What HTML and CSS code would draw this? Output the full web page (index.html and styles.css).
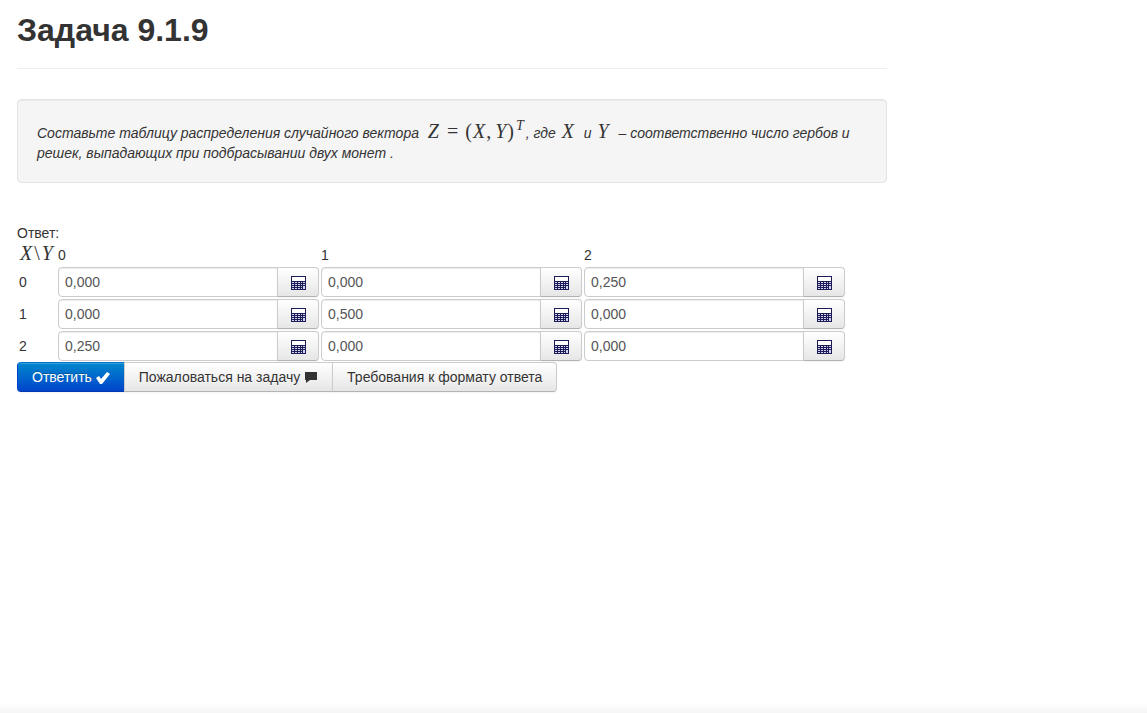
FILE: index.html
```html
<!DOCTYPE html>
<html lang="ru">
<head>
<meta charset="utf-8">
<title>Задача 9.1.9</title>
<link rel="stylesheet" href="styles.css">
</head>
<body>
<svg class="sprite" aria-hidden="true">
  <symbol id="calc" viewBox="0 0 16 16">
    <path fill="#1c1c58" d="M1 1h15v14H1z"/>
    <path fill="#fff" d="M2 2h13v4H2z"/>
    <path fill="#d4d4ec" d="M2 7h2v1H2zM5 7h2v1H5zM8 7h2v1H8zM11 7h1v1h-1zM13 7h2v1h-2zM2 9h2v1H2zM5 9h2v1H5zM8 9h2v1H8zM11 9h1v1h-1zM13 9h2v1h-2zM2 11h2v1H2zM5 11h2v1H5zM8 11h2v1H8zM11 11h1v1h-1zM13 11h2v3h-2zM2 13h2v1H2zM5 13h2v1H5zM8 13h2v1H8zM11 13h1v1h-1z"/>
  </symbol>
</svg>
<main class="container">
  <header class="page-header"><h1>Задача 9.1.9</h1></header>
  <p class="well">Составьте таблицу распределения случайного вектора <span class="math formula"><i>Z</i><span class="rel">=</span>(<i>X</i>,<i class="after-comma">Y</i>)<sup>T</sup></span>, где <span class="math var"><i>X</i></span> и <span class="math var"><i>Y</i></span> – соответственно число гербов и решек, выпадающих при подбрасывании двух монет .</p>
  <form class="answer">
    <div>Ответ:</div>
    <table class="grid">
      <thead>
        <tr><th class="corner" scope="col"><span class="math"><i>X</i><span class="slash">\</span><i>Y</i></span></th><th scope="col">0</th><th scope="col">1</th><th scope="col">2</th></tr>
      </thead>
      <tbody>
        <tr><th scope="row">0</th>
          <td><div class="field"><input type="text" value="0,000" aria-label="X=0, Y=0"><button type="button" class="btn" aria-label="Калькулятор"><svg class="icon"><use href="#calc"/></svg></button></div></td>
          <td><div class="field"><input type="text" value="0,000" aria-label="X=0, Y=1"><button type="button" class="btn" aria-label="Калькулятор"><svg class="icon"><use href="#calc"/></svg></button></div></td>
          <td><div class="field"><input type="text" value="0,250" aria-label="X=0, Y=2"><button type="button" class="btn" aria-label="Калькулятор"><svg class="icon"><use href="#calc"/></svg></button></div></td></tr>
        <tr><th scope="row">1</th>
          <td><div class="field"><input type="text" value="0,000" aria-label="X=1, Y=0"><button type="button" class="btn" aria-label="Калькулятор"><svg class="icon"><use href="#calc"/></svg></button></div></td>
          <td><div class="field"><input type="text" value="0,500" aria-label="X=1, Y=1"><button type="button" class="btn" aria-label="Калькулятор"><svg class="icon"><use href="#calc"/></svg></button></div></td>
          <td><div class="field"><input type="text" value="0,000" aria-label="X=1, Y=2"><button type="button" class="btn" aria-label="Калькулятор"><svg class="icon"><use href="#calc"/></svg></button></div></td></tr>
        <tr><th scope="row">2</th>
          <td><div class="field"><input type="text" value="0,250" aria-label="X=2, Y=0"><button type="button" class="btn" aria-label="Калькулятор"><svg class="icon"><use href="#calc"/></svg></button></div></td>
          <td><div class="field"><input type="text" value="0,000" aria-label="X=2, Y=1"><button type="button" class="btn" aria-label="Калькулятор"><svg class="icon"><use href="#calc"/></svg></button></div></td>
          <td><div class="field"><input type="text" value="0,000" aria-label="X=2, Y=2"><button type="button" class="btn" aria-label="Калькулятор"><svg class="icon"><use href="#calc"/></svg></button></div></td></tr>
      </tbody>
    </table>
    <div class="btn-group">
      <button type="submit" class="btn btn-primary">Ответить <svg class="glyph" viewBox="0 0 14 14"><path fill="#fff" d="M0 7l3-2 2 3 6-7 3 2-8 10H4z"/></svg></button>
      <button type="button" class="btn">Пожаловаться на задачу <svg class="glyph" viewBox="0 0 14 14"><path fill="#333" d="M1 1h12v8H6l-4 3V9H1z"/></svg></button>
      <button type="button" class="btn">Требования к формату ответа</button>
    </div>
  </form>
</main>
<footer class="page-edge"></footer>
</body>
</html>
```
FILE: styles.css
```css
* { box-sizing: border-box; }
body {
  margin: 0;
  min-height: 100vh;
  display: flex;
  flex-direction: column;
  font: 14px/20px "Liberation Sans", Arial, sans-serif;
  color: #333;
  background: #fff;
}
.sprite { display: none; }
.container { width: 100%; max-width: 904px; padding: 10px 17px; }
.page-header { padding-bottom: 18px; margin-bottom: 30px; border-bottom: 1px solid #eee; }
h1 { margin: 0; font-size: 32px; line-height: 40px; font-weight: bold; }
.well {
  margin: 0 0 40px;
  padding: 21px 19px 19px;
  background: #f5f5f5;
  border: 1px solid #e3e3e3;
  border-radius: 4px;
  box-shadow: inset 0 1px 1px rgba(0, 0, 0, .05);
  font-style: italic;
}
.math {
  font: 20px/20px "Liberation Serif", "Times New Roman", serif;
  white-space: nowrap;
}
.formula { margin-left: 4px; }
.math i { margin: 0 1px; font-style: italic; }
.math sup { margin: 0 2px; font-size: 14px; line-height: 0; font-style: italic; vertical-align: 8px; }
.rel { margin: 0 7px; }
.slash { margin: 0 1px; }
.math .after-comma { margin-left: 4px; }
.var { margin: 0 5px 0 1px; }
.grid { border-spacing: 2px; border-collapse: separate; margin-top: -2px; }
.grid th, .grid td { padding: 0; text-align: left; font-weight: normal; }
.grid .corner { width: 37px; }
thead th { height: 22px; vertical-align: bottom; }
.field { display: flex; }
.field input {
  width: 220px;
  min-width: 0;
  height: 30px;
  padding: 4px 6px;
  font: inherit;
  color: #555;
  background: #fff;
  border: 1px solid #ccc;
  border-radius: 4px 0 0 4px;
  box-shadow: inset 0 1px 1px rgba(0, 0, 0, .075);
}
.btn {
  height: 30px;
  padding: 4px 12px;
  margin-left: -1px;
  font: inherit;
  color: #333;
  text-shadow: 0 1px 1px rgba(255, 255, 255, .75);
  background: linear-gradient(#fff, #e6e6e6);
  border: 1px solid #ccc;
  border-bottom-color: #b3b3b3;
  box-shadow: inset 0 1px 0 rgba(255, 255, 255, .2), 0 1px 2px rgba(0, 0, 0, .05);
  white-space: nowrap;
}
.field .btn { border-radius: 0 4px 4px 0; }
.icon { display: block; width: 16px; height: 16px; margin-top: 2px; }
.btn-group { display: flex; margin-top: -1px; }
.btn-group .btn { padding: 4px 14px; }
.btn-group .btn:first-child { margin-left: 0; border-radius: 4px 0 0 4px; }
.btn-group .btn:last-child { border-radius: 0 4px 4px 0; }
.btn-primary {
  color: #fff;
  text-shadow: 0 -1px 0 rgba(0, 0, 0, .25);
  background: linear-gradient(#08c, #04c);
  border-color: #0074cc #04c #003ab0;
}
.glyph { width: 14px; height: 14px; vertical-align: -3px; }
.page-edge { height: 10px; margin-top: auto; background: linear-gradient(#fff, #f5f5f5); }
```
